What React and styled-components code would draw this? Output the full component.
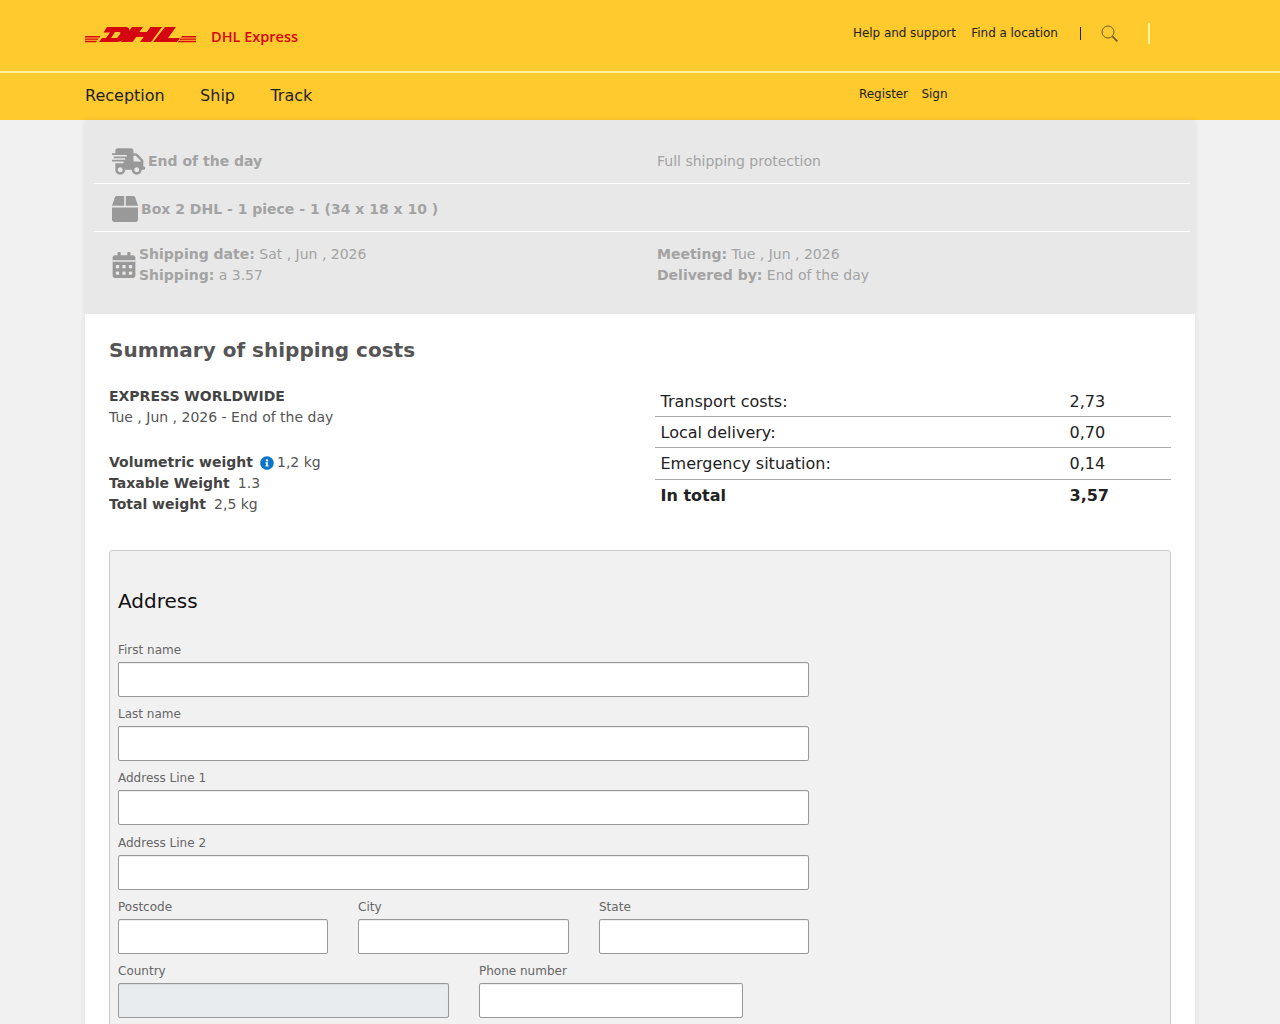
import React from 'react'
import styled, { createGlobalStyle } from 'styled-components'
import { FaShippingFast, FaBox, FaCalendarAlt, FaInfoCircle } from 'react-icons/fa'

const GlobalStyle = createGlobalStyle`
  html, body {
    height: 1024px;
    margin: 0;
    overflow: hidden;
    background: #f1f1f1;
    font-family: "DejaVu Sans", sans-serif;
    color: #555;
  }
  * { box-sizing: border-box; }
`

// #region Header
const TopBar = styled.header`
  display: flex;
  justify-content: space-between;
  height: 71px;
  padding: 0 85px;
  background: #ffca2e;
`
const Brand = styled.div`
  display: flex;
  align-items: center;
  gap: 15px;
  height: 71px;
  padding-bottom: 2px;
`
const BrandName = styled.span`
  font-family: "Open Sans", sans-serif;
  font-size: 14.5px;
  font-weight: 600;
  color: #d40511;
  padding-top: 4px;
`
const TopLinks = styled.div`
  display: flex;
  align-items: center;
  width: 342px;
  height: 66px;
  font-size: 12px;
  letter-spacing: -0.05px;
  color: #222;
`
const TopLink = styled.span`
  margin-right: 15.5px;
`
const Divider = styled.span`
  width: 1px;
  height: 13px;
  margin: 0 20px 0 7px;
  background: #222;
`
const LightDivider = styled.span`
  width: 2px;
  height: 21px;
  margin-left: 30px;
  background: #fff3a0;
`
const Rule = styled.div`
  height: 2px;
  background: #fff3a0;
`
const NavBar = styled.nav`
  display: flex;
  align-items: center;
  justify-content: space-between;
  height: 47px;
  padding: 0 85px 2px;
  background: #ffca2e;
`
const NavLinks = styled.div`
  display: flex;
  gap: 35.4px;
  font-size: 16px;
  color: #222;
`
const AccountLinks = styled.div`
  display: flex;
  gap: 13.5px;
  width: 336px;
  padding-bottom: 3px;
  font-size: 12px;
  letter-spacing: -0.05px;
  color: #222;
`
// #endregion

// #region Summary band
const Page = styled.main`
  width: 1110px;
  margin: 0 auto;
  background: #fff;
  box-shadow: 0 0 6px rgba(0, 0, 0, 0.08);
`
const Band = styled.section`
  height: 194px;
  padding: 17px 5px 0 9px;
  background: #e8e8e8;
  font-size: 14px;
  color: #a3a3a3;
`
const BandRow = styled.div`
  display: grid;
  grid-template-columns: 545px 1fr;
  align-items: center;
  height: ${p => p.$height}px;
  padding: ${p => p.$top || 0}px 0 0 18px;
  border-bottom: ${p => (p.$last ? 'none' : '1px solid #fff')};
`
const Cell = styled.div`
  display: flex;
  align-items: center;
  gap: ${p => p.$gap || 0}px;
  line-height: 21px;
`
const IconSlot = styled.span`
  display: flex;
  color: #999;
  margin-left: ${p => p.$shift || 0}px;
`
const Strong = styled.b`
  font-weight: 700;
`
// #endregion

// #region Costs
const Card = styled.section`
  padding: 24px 24px 0;
`
const Title = styled.h2`
  margin: 0 0 23px;
  font-size: 20px;
  line-height: 25px;
  font-weight: 700;
  color: #555;
`
const Columns = styled.div`
  display: grid;
  grid-template-columns: 546px 516px;
  height: 164px;
`
const Info = styled.div`
  font-size: 14px;
  line-height: 21px;
  color: #555;
`
const ServiceName = styled.div`
  font-weight: 700;
  color: #444;
`
const Weights = styled.div`
  margin-top: 24px;
`
const WeightRow = styled.div`
  display: flex;
  align-items: center;
  gap: 8px;
  b { color: #444; }
`
const InfoIcon = styled(FaInfoCircle)`
  color: #0b76c5;
  margin-left: -1px;
  margin-right: -5px;
`
const CostTable = styled.div`
  font-size: 16px;
  color: #222;
`
const CostRow = styled.div`
  display: grid;
  grid-template-columns: 409px 1fr;
  align-items: center;
  height: ${p => p.$height || 31}px;
  padding-left: 5.5px;
  font-weight: ${p => (p.$total ? 700 : 400)};
  border-bottom: ${p => (p.$total ? 'none' : '1px solid #aaa')};
`
// #endregion

// #region Form
const FormBox = styled.div`
  height: 600px;
  padding: 38px 8px 0;
  background: #f1f1f1;
  border: 1px solid #ccc;
  border-radius: 3px;
`
const FormTitle = styled.h3`
  margin: 0 0 29px;
  font-size: 20px;
  line-height: 25px;
  font-weight: 400;
  color: #111;
`
const Fields = styled.div`
  display: grid;
  grid-template-columns: ${p => p.$columns || '691px'};
  column-gap: 30px;
  margin-bottom: 10.2px;
`
const Field = styled.label`
  display: block;
  font-size: 12px;
  line-height: 14px;
  color: #666;
`
const Input = styled.div`
  height: 35px;
  margin-top: 5px;
  background: ${p => (p.$disabled ? '#e9ecef' : '#fff')};
  border: 1px solid #999;
  border-radius: 2px;
  box-shadow: inset 0 1px 1px rgba(0, 0, 0, 0.075);
`
// #endregion

const DhlLogo = () => (
  <svg width="111" height="16" viewBox="0 0 111 16" fill="#d40511" fillRule="evenodd">
    <path d="M0 9h15.5l-1 1.4H0zM0 11.4h13.8l-1 1.4H0zM0 13.8h12l-1 1.4H0z" />
    <path d="M22 0H40c4.5 0 5.5 2.5 3.5 5.5L40 10.5C38 13.5 35 15 31 15H14l2.9-4H21l4-5.5h-6.5zM30 5l-4 6h4.5c1.2 0 2-.4 2.8-1.5l1.8-2.5c.7-1.2.3-2-1-2z" />
    <path d="M47 0h11l-3.7 5h7.5L65.5 0H77L66 15H55l3.7-5h-7.5L47.5 15H36z" />
    <path d="M80 0h11L83 11h12l-3 4H68z" />
    <path d="M97 9h14v1.4H96zM95.4 11.4H111v1.4H94.4zM93.8 13.8H111v1.4H92.8z" />
  </svg>
)

const SearchIcon = () => (
  <svg width="17" height="17" viewBox="0 0 17 17" fill="none" stroke="#6b5a2a">
    <circle cx="7" cy="7" r="6" strokeWidth="1" />
    <path d="M11.4 11.4l5 5" strokeWidth="1.6" />
  </svg>
)

const App = () => (
  <>
    <GlobalStyle />
    <TopBar>
      <Brand>
        <DhlLogo />
        <BrandName>DHL Express</BrandName>
      </Brand>
      <TopLinks>
        <TopLink>Help and support</TopLink>
        <TopLink>Find a location</TopLink>
        <Divider />
        <SearchIcon />
        <LightDivider />
      </TopLinks>
    </TopBar>
    <Rule />
    <NavBar>
      <NavLinks>
        <span>Reception</span>
        <span>Ship</span>
        <span>Track</span>
      </NavLinks>
      <AccountLinks>
        <span>Register</span>
        <span>Sign</span>
      </AccountLinks>
    </NavBar>

    <Page>
      <Band>
        <BandRow $height={47} $top={2}>
          <Cell $gap={3}>
            <IconSlot><FaShippingFast size={33} /></IconSlot>
            <Strong>End of the day</Strong>
          </Cell>
          <Cell>Full shipping protection</Cell>
        </BandRow>
        <BandRow $height={48} $top={3}>
          <Cell $gap={3}>
            <IconSlot><FaBox size={26} /></IconSlot>
            <Strong>Box 2 DHL - 1 piece - 1 (34 x 18 x 10 )</Strong>
          </Cell>
        </BandRow>
        <BandRow $height={66} $last>
          <Cell $gap={2}>
            <IconSlot $shift={-1}><FaCalendarAlt size={26} /></IconSlot>
            <div>
              <Strong>Shipping date:</Strong> Sat , Jun , 2026
              <br />
              <Strong>Shipping:</Strong> a 3.57
            </div>
          </Cell>
          <Cell>
            <div>
              <Strong>Meeting:</Strong> Tue , Jun , 2026
              <br />
              <Strong>Delivered by:</Strong> End of the day
            </div>
          </Cell>
        </BandRow>
      </Band>

      <Card>
        <Title>Summary of shipping costs</Title>
        <Columns>
          <Info>
            <ServiceName>EXPRESS WORLDWIDE</ServiceName>
            <div>Tue , Jun , 2026 - End of the day</div>
            <Weights>
              <WeightRow>
                <b>Volumetric weight</b>
                <InfoIcon size={14} />
                <span>1,2 kg</span>
              </WeightRow>
              <WeightRow><b>Taxable Weight</b><span>1.3</span></WeightRow>
              <WeightRow><b>Total weight</b><span>2,5 kg</span></WeightRow>
            </Weights>
          </Info>
          <CostTable>
            <CostRow><span>Transport costs:</span><span>2,73</span></CostRow>
            <CostRow><span>Local delivery:</span><span>0,70</span></CostRow>
            <CostRow $height={32}><span>Emergency situation:</span><span>0,14</span></CostRow>
            <CostRow $total $height={30}><span>In total</span><span>3,57</span></CostRow>
          </CostTable>
        </Columns>

        <FormBox>
          <FormTitle>Address</FormTitle>
          <Fields><Field>First name<Input /></Field></Fields>
          <Fields><Field>Last name<Input /></Field></Fields>
          <Fields><Field>Address Line 1<Input /></Field></Fields>
          <Fields><Field>Address Line 2<Input /></Field></Fields>
          <Fields $columns="210px 211px 210px">
            <Field>Postcode<Input /></Field>
            <Field>City<Input /></Field>
            <Field>State<Input /></Field>
          </Fields>
          <Fields $columns="331px 264px">
            <Field>Country<Input $disabled /></Field>
            <Field>Phone number<Input /></Field>
          </Fields>
        </FormBox>
      </Card>
    </Page>
  </>
)

export default App
